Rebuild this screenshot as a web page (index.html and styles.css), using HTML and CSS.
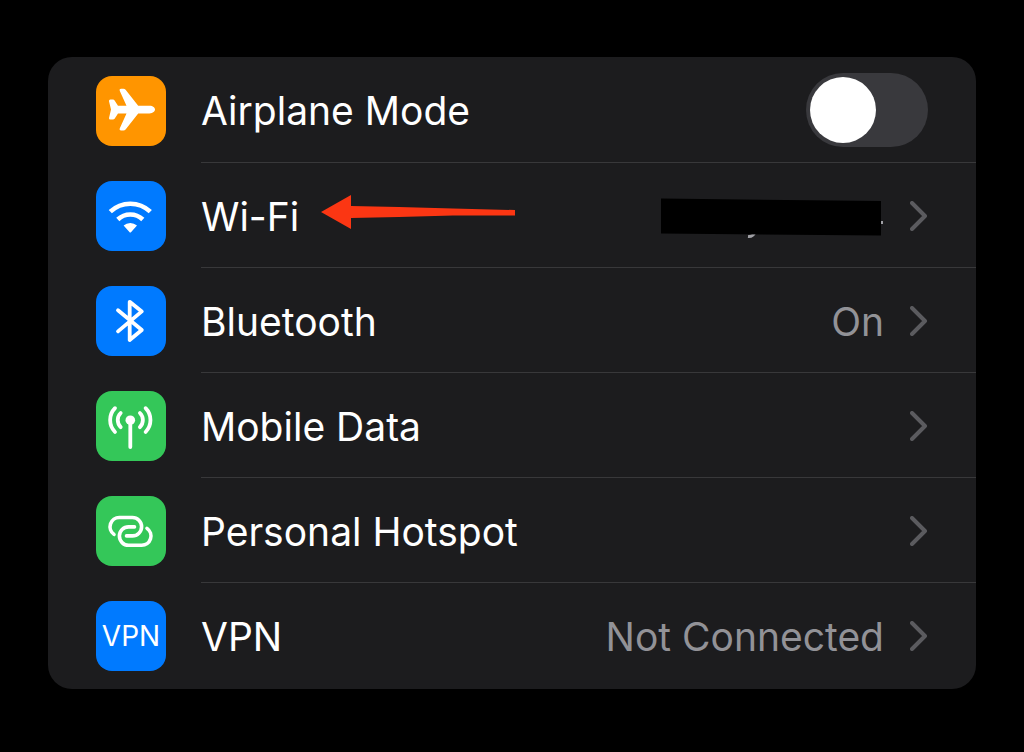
FILE: index.html
```html
<!DOCTYPE html>
<html lang="en">
<head>
<meta charset="utf-8">
<meta name="viewport" content="width=device-width, initial-scale=1">
<title>Settings</title>
<link rel="stylesheet" href="styles.css">
</head>
<body>
<main class="page">
  <ul class="card">
    <li>
      <label class="row">
        <span class="icon icon-orange">
          <svg viewBox="0 0 70 70" aria-hidden="true"><path fill="#fff" d="M15 33.6 13 25.2Q12.8 23.6 14.4 23.6H17Q18 23.6 18.6 24.4L22 29.8H30.5L23.7 14.8Q23 12.8 25 12.8H27.4Q28.8 12.8 29.6 13.8L42.2 29.8H53.5C57 29.8 59 31.8 59 33.6S57 37.4 53.5 37.4H42.2L29.6 53.4Q28.8 54.4 27.4 54.4H25Q23 54.4 23.7 52.4L30.5 37.4H22L18.6 42.8Q18 43.6 17 43.6H14.4Q12.8 43.6 13 42Z"/></svg>
        </span>
        <span class="content">
          <span class="title">Airplane Mode</span>
          <input class="toggle" type="checkbox" role="switch">
        </span>
      </label>
    </li>
    <li>
      <a class="row" href="#wifi">
        <span class="icon icon-blue">
          <svg viewBox="0 0 70 70" aria-hidden="true"><g fill="none" stroke="#fff" stroke-width="4.6"><path d="M14.3 30.7A29 29 0 0 1 54.3 30.7"/><path d="M21.8 38.5A18.2 18.2 0 0 1 46.8 38.5"/></g><path fill="#fff" d="M27.6 44.6A10 10 0 0 1 41 44.6L35.2 51Q34.3 52 33.4 51Z"/></svg>
        </span>
        <span class="content">
          <span class="title">Wi-Fi</span>
          <svg class="arrow" viewBox="0 0 194 34" aria-hidden="true"><path fill="#fb3613" d="M0 17 30 0V11L78 12 132 13.5 194 15V20.5L132 20.5 78 22 30 23V34Z"/></svg>
          <svg class="redaction" viewBox="0 0 223 42" role="img" aria-label="Hidden network name"><path fill="none" stroke="#a0a0a5" stroke-width="3" d="M87 38.5Q92 39 94 34"/><path fill="#a0a0a5" d="M220 23h2v3h-2z"/><path d="M0 .5 220 3V37.5L0 35.5Z"/></svg>
          <svg class="chevron" viewBox="0 0 18 30" aria-hidden="true"><path d="M2 2 15 15 2 28"/></svg>
        </span>
      </a>
    </li>
    <li>
      <a class="row" href="#bluetooth">
        <span class="icon icon-blue">
          <svg viewBox="0 0 70 70" aria-hidden="true"><path fill="none" stroke="#fff" stroke-width="3.8" stroke-linecap="round" stroke-linejoin="round" d="M22 24.2 45.8 44 33.7 54V15.8L45.8 25.4 22 45.4"/></svg>
        </span>
        <span class="content">
          <span class="title">Bluetooth</span>
          <span class="value">On</span>
          <svg class="chevron" viewBox="0 0 18 30" aria-hidden="true"><path d="M2 2 15 15 2 28"/></svg>
        </span>
      </a>
    </li>
    <li>
      <a class="row" href="#mobile-data">
        <span class="icon icon-green">
          <svg viewBox="0 0 70 70" aria-hidden="true"><circle cx="34.3" cy="29.2" r="4.8" fill="#fff"/><g fill="none" stroke="#fff" stroke-width="3.8" stroke-linecap="round"><path d="M34.3 30V56"/><path d="M24.7 22A10 10 0 0 0 24.7 36.2M43.9 22A10 10 0 0 1 43.9 36.2"/><path d="M19 17.2A17 17 0 0 0 19 41M49.6 17.2A17 17 0 0 1 49.6 41"/></g></svg>
        </span>
        <span class="content">
          <span class="title">Mobile Data</span>
          <svg class="chevron" viewBox="0 0 18 30" aria-hidden="true"><path d="M2 2 15 15 2 28"/></svg>
        </span>
      </a>
    </li>
    <li>
      <a class="row" href="#hotspot">
        <span class="icon icon-green">
          <svg viewBox="0 0 70 70" aria-hidden="true"><g fill="none" stroke="#fff" stroke-width="3.6" stroke-linecap="round"><path d="M18 38.4A9.3 9.3 0 0 1 23.5 21.5H36.4A9.2 9.2 0 0 1 36.4 39.9H30.5"/><path d="M51 32.4A9.3 9.3 0 0 1 45.5 49.3H32.6A9.2 9.2 0 0 1 32.6 30.9H38.5"/></g></svg>
        </span>
        <span class="content">
          <span class="title">Personal Hotspot</span>
          <svg class="chevron" viewBox="0 0 18 30" aria-hidden="true"><path d="M2 2 15 15 2 28"/></svg>
        </span>
      </a>
    </li>
    <li>
      <a class="row" href="#vpn">
        <span class="icon icon-blue icon-text" aria-hidden="true">VPN</span>
        <span class="content">
          <span class="title">VPN</span>
          <span class="value">Not Connected</span>
          <svg class="chevron" viewBox="0 0 18 30" aria-hidden="true"><path d="M2 2 15 15 2 28"/></svg>
        </span>
      </a>
    </li>
  </ul>
</main>
</body>
</html>
```
FILE: styles.css
```css
* {
  box-sizing: border-box;
}

body {
  margin: 0;
  background: #000;
  color: #fff;
  font-family: Inter, "Liberation Sans", sans-serif;
  font-size: 39px;
  line-height: 48px;
}

.page {
  padding: 57px 48px;
}

.card {
  margin: 0;
  padding: 1px 0;
  list-style: none;
  background: #1c1c1e;
  border-radius: 24px;
  overflow: hidden;
}

.row {
  display: flex;
  align-items: center;
  gap: 35px;
  padding-left: 48px;
  color: inherit;
  text-decoration: none;
}

.icon {
  flex: none;
  width: 70px;
  height: 70px;
  border-radius: 16px;
}

.icon svg {
  display: block;
}

.icon-orange {
  background: #ff9500;
}

.icon-blue {
  background: #007aff;
}

.icon-green {
  background: #34c759;
}

.icon-text {
  display: flex;
  align-items: center;
  justify-content: center;
  font-size: 28px;
}

.content {
  flex: 1;
  display: flex;
  align-items: center;
  min-height: 105px;
  padding-right: 48px;
  border-bottom: 1px solid #38383a;
}

a .content {
  padding-top: 2px;
}

li:last-child .content {
  border-bottom-color: transparent;
}

.title {
  margin-right: auto;
  padding-top: 2px;
}

.value {
  padding-top: 2px;
  color: #929297;
}

.chevron {
  flex: none;
  width: 18px;
  height: 30px;
  margin-left: 26px;
  fill: none;
  stroke: #5b5b5f;
  stroke-width: 4;
  stroke-linecap: round;
  stroke-linejoin: round;
}

.title:has(+ .arrow) {
  margin-right: 22px;
}

.arrow {
  width: 194px;
  height: 34px;
  margin-right: auto;
  margin-bottom: 8px;
}

.redaction {
  width: 223px;
  height: 42px;
  margin-top: 6px;
}

.toggle {
  appearance: none;
  flex: none;
  display: flex;
  width: 122px;
  height: 74px;
  margin: 0;
  padding: 4px;
  border-radius: 37px;
  background: #39393d;
}

.toggle::before {
  content: "";
  width: 66px;
  height: 66px;
  border-radius: 50%;
  background: #fff;
}

.toggle:checked {
  justify-content: flex-end;
  background: #34c759;
}
```
